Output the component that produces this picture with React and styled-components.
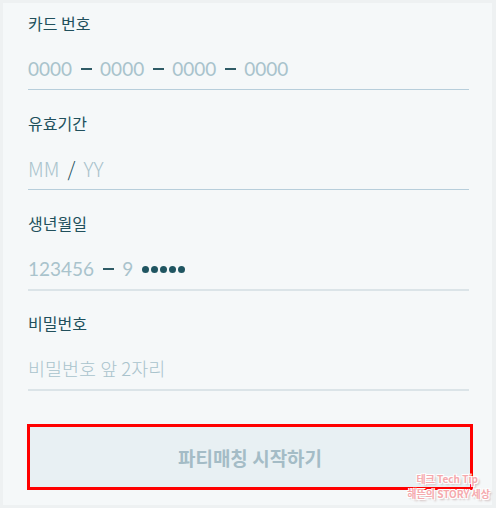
import styled, { createGlobalStyle } from 'styled-components';

const GlobalStyle = createGlobalStyle`
  html, body {
    margin: 0;
    padding: 0;
    background: #eef1f2;
  }
  body {
    font-family: "Noto Sans CJK KR", "Noto Sans", sans-serif;
  }
`;

const fields = [
  { label: '카드 번호', kind: 'card', line: 'blue' },
  { label: '유효기간', kind: 'expiry', line: 'blue' },
  { label: '생년월일', kind: 'birth', line: 'gray' },
  { label: '비밀번호', kind: 'password', line: 'gray' },
];

const FieldValue = ({ kind }) => {
  if (kind === 'card') {
    return (
      <S.Value>
        <S.Hint>0000</S.Hint>
        <S.Dash />
        <S.Hint>0000</S.Hint>
        <S.Dash />
        <S.Hint>0000</S.Hint>
        <S.Dash />
        <S.Hint>0000</S.Hint>
      </S.Value>
    );
  }
  if (kind === 'expiry') {
    return (
      <S.Value>
        <S.Hint font="noto">MM</S.Hint>
        <S.Slash>/</S.Slash>
        <S.Hint font="noto">YY</S.Hint>
      </S.Value>
    );
  }
  if (kind === 'birth') {
    return (
      <S.Value>
        <S.Hint>123456</S.Hint>
        <S.Dash />
        <S.Hint>9</S.Hint>
        <S.Dots>
          {[0, 1, 2, 3, 4].map((i) => (
            <S.Dot key={i} />
          ))}
        </S.Dots>
      </S.Value>
    );
  }
  return (
    <S.Value>
      <S.Hint font="korean">비밀번호 앞 2자리</S.Hint>
    </S.Value>
  );
};

const App = () => (
  <>
    <GlobalStyle />
    <S.Frame>
      <S.Panel>
        {fields.map((f) => (
          <S.Field key={f.label}>
            <S.Label>{f.label}</S.Label>
            <S.InputRow line={f.line}>
              <FieldValue kind={f.kind} />
            </S.InputRow>
          </S.Field>
        ))}
        <S.Button type="button">파티매칭 시작하기</S.Button>
        <S.Watermark>
          <span>테크 Tech Tip</span>
          <span>해뜬의 STORY 세상</span>
        </S.Watermark>
      </S.Panel>
    </S.Frame>
  </>
);

const hintFont = {
  digits: 'font-family: Lato, sans-serif; font-size: 19px;',
  noto: 'font-family: "Noto Sans CJK KR", sans-serif; font-size: 20px; font-weight: 300;',
  korean: 'font-family: "Noto Sans CJK KR", sans-serif; font-size: 18.5px; font-weight: 300;',
};

const S = {
  Frame: styled.div`
    width: 496px;
    height: 508px;
    box-sizing: border-box;
    padding: 3px 4px 3px 3px;
    background: #eef1f2;
  `,
  Panel: styled.div`
    position: relative;
    height: 100%;
    box-sizing: border-box;
    background: #f5f8f9;
    padding: 8px 23px 0 25px;
    display: flex;
    flex-direction: column;
  `,
  Field: styled.div`
    display: flex;
    flex-direction: column;
    margin-bottom: 21px;
  `,
  Label: styled.div`
    font-family: "Noto Sans CJK KR", sans-serif;
    font-size: 16px;
    line-height: 24px;
    color: #21505c;
  `,
  InputRow: styled.div`
    height: 42px;
    margin-top: 12px;
    display: flex;
    align-items: center;
    border-bottom: ${({ line }) =>
      line === 'gray' ? '2px solid #dbe4e8' : '1px solid #b7cedb'};
    margin-bottom: ${({ line }) => (line === 'gray' ? '-1px' : '0')};
  `,
  Value: styled.div`
    display: flex;
    align-items: center;
    color: #a9c3cc;
  `,
  Hint: styled.span`
    ${({ font = 'digits' }) => hintFont[font]}
    color: #a9c3cc;
  `,
  Dash: styled.span`
    display: inline-block;
    width: 11px;
    height: 2px;
    margin: 1px 8px 0 9px;
    background: #2f5b66;
  `,
  Slash: styled.span`
    font-family: "Noto Sans CJK KR", sans-serif;
    font-weight: 300;
    font-size: 20px;
    color: #21505c;
    margin: 0 8px;
  `,
  Dots: styled.span`
    display: inline-flex;
    gap: 2px;
    margin-left: 9px;
    margin-top: 2px;
  `,
  Dot: styled.span`
    width: 7px;
    height: 7px;
    border-radius: 50%;
    background: #1f5561;
  `,
  Button: styled.button`
    margin-top: 13px;
    margin-left: -1px;
    width: 446px;
    height: 66px;
    box-sizing: border-box;
    border: 3px solid #ff0000;
    background: #e8f0f3;
    font-family: "Noto Sans CJK KR", sans-serif;
    font-weight: 700;
    font-size: 19px;
    color: #a4bcc6;
    padding-top: 2px;
    cursor: pointer;
  `,
  Watermark: styled.div`
    position: absolute;
    right: 2px;
    bottom: 4px;
    display: flex;
    flex-direction: column;
    align-items: flex-end;
    font-family: "Noto Sans CJK KR", sans-serif;
    font-weight: 700;
    font-size: 10px;
    line-height: 15px;
    color: #f5a9ad;
    text-shadow: 1px 1px 0 #fff, -1px -1px 0 #fff, 1px -1px 0 #fff,
      -1px 1px 0 #fff, 2px 2px 2px #c9b4b4;
    span:first-child {
      margin-right: 12px;
    }
  `,
};

export default App;
